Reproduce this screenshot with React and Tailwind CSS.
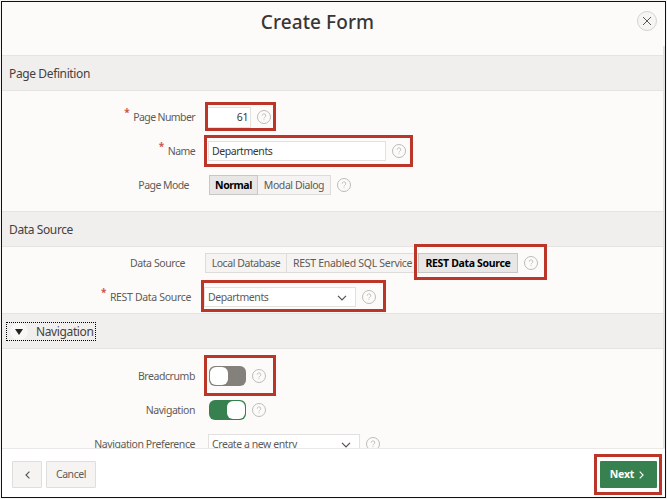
import React from "react";

function Help({ className = "" }) {
  return (
    <svg viewBox="0 0 14 14" className={`h-[14px] w-[14px] shrink-0 ${className}`} fill="none" stroke="#bdbbb9">
      <circle cx="7" cy="7" r="6.5" strokeWidth="1" />
      <path d="M5.2 5.7a1.8 1.8 0 1 1 2.7 1.5c-.6.35-.9.6-.9 1.2" strokeWidth="0.9" />
      <path d="M7 9.3v.9" strokeWidth="0.9" />
    </svg>
  );
}

function Down() {
  return (
    <svg viewBox="0 0 10 6" className="h-[6px] w-[10px]" fill="none" stroke="#55504c" strokeWidth="1.2">
      <path d="M1 .9l4 4 4-4" />
    </svg>
  );
}

function Label({ children, required, className = "" }) {
  return (
    <div className={`flex shrink-0 justify-end pt-[2px] whitespace-nowrap text-[#5f5b57] ${className}`}>
      <span className="relative">
        {required && (
          <span className="absolute -top-[8px] -left-[9px] text-[10px] leading-[20px] font-bold text-[#cf5349]">*</span>
        )}
        {children}
      </span>
    </div>
  );
}

function Section({ children, className = "" }) {
  return (
    <div className={`flex h-[36px] shrink-0 items-center border-y border-[#e5e4e2] bg-[#f0efee] text-[12px] tracking-[-0.38px] text-[#45413e] ${className}`}>
      {children}
    </div>
  );
}

function Toggle({ on }) {
  return (
    <div className={`flex h-[20px] w-[37px] items-center rounded-[6px] p-px ${on ? "justify-end bg-[#37804f]" : "bg-[#84807b]"}`}>
      <div className="h-[18px] w-[18px] rounded-[6px] bg-white" />
    </div>
  );
}

function Mark({ className }) {
  return <div className={`pointer-events-none absolute border-[3px] border-[#bb3529] ${className}`} />;
}

const row = "flex h-[34px] shrink-0 items-center";

export default function App() {
  return (
    <div className="h-[499px] w-[667px] overflow-hidden bg-[#f5f5f5] p-px font-['Noto_Sans',sans-serif] text-[10.5px] tracking-[-0.43px]">
      <div className="relative flex h-[497px] w-[665px] flex-col overflow-hidden border border-[#111] bg-[#fcfbfa]">
        <div className="flex h-[53px] shrink-0 items-start">
          <h1 className="flex-1 pt-[5px] pr-[4px] text-center text-[19px] leading-[30px] font-medium tracking-[0.1px] text-[#3a3633]">
            Create Form
          </h1>
          <button className="mt-[9px] mr-[8px] flex h-[20px] w-[20px] items-center justify-center rounded-full border border-[#d5d3d1] bg-[#f6f5f3]">
            <svg viewBox="0 0 10 10" className="h-[10px] w-[10px]" stroke="#5c5855" strokeWidth="1">
              <path d="M1 1l8 8M9 1l-8 8" />
            </svg>
          </button>
        </div>

        <Section className="pt-px pl-[7px]">Page Definition</Section>
        <div className="h-[120px] shrink-0 pt-[9px]">
          <div className={row}>
            <Label required className="w-[193px] tracking-[-0.6px]">Page Number</Label>
            <div className="ml-[12px] flex h-[21px] w-[44px] items-center justify-end border border-[#e3e1df] bg-white pt-[2px] pr-[2px] text-[#3a3633]">61</div>
            <Help className="ml-[6px]" />
          </div>
          <div className={row}>
            <Label required className="w-[193px] tracking-[-0.6px]">Name</Label>
            <div className="ml-[13px] flex h-[20px] w-[178px] items-center border border-[#e3e1df] bg-white pt-px pl-[3px] text-[#3a3633]">Departments</div>
            <Help className="ml-[6px]" />
          </div>
          <div className={row}>
            <Label className="w-[187px] tracking-[-0.55px]">Page Mode</Label>
            <div className="ml-[20px] flex h-[20px] whitespace-nowrap text-[#5f5b57]">
              <div className="flex w-[49px] items-center justify-center border border-[#c9c6c3] bg-[#e9e7e5] pt-px font-bold text-black">Normal</div>
              <div className="flex w-[73px] items-center justify-center border border-l-0 border-[#dedcda] bg-[#f5f4f2] pt-px">Modal Dialog</div>
            </div>
            <Help className="ml-[6px]" />
          </div>
        </div>

        <Section className="pt-px pl-[7px]">Data Source</Section>
        <div className="h-[66px] shrink-0">
          <div className="-mt-px">
            <div className={row}>
              <Label className="w-[183px]">Data Source</Label>
              <div className="ml-[20px] flex h-[20px] whitespace-nowrap text-[#5f5b57]">
                <div className="flex w-[82px] items-center justify-center border border-[#dedcda] bg-[#f5f4f2] pt-px">Local Database</div>
                <div className="flex w-[131px] items-center border border-x-0 border-[#dedcda] bg-[#f5f4f2] pt-px pl-[6px] tracking-[-0.3px]">REST Enabled SQL Service</div>
                <div className="flex w-[100px] items-center justify-center border border-[#c9c6c3] bg-[#e9e7e5] pt-px font-bold tracking-[-0.33px] text-black">REST Data Source</div>
              </div>
              <Help className="ml-[6px]" />
            </div>
            <div className={row}>
              <Label required className="w-[189px] tracking-[-0.33px]">REST Data Source</Label>
              <div className="ml-[13px] flex h-[20px] w-[152px] items-center justify-between border border-[#e3e1df] bg-white pt-px pr-[8px] pl-[3px] text-[#5f5b57]">
                <span>Departments</span>
                <Down />
              </div>
              <Help className="ml-[6px]" />
            </div>
          </div>
        </div>

        <Section className="pt-px pl-[4px]">
          <div className="flex h-[19px] w-[90px] items-center border border-dotted border-black pl-[3px]">
            <div className="flex h-[17px] w-[18px] items-center justify-center rounded-full bg-[#f8f7f6]">
              <svg viewBox="0 0 8 6" className="h-[6px] w-[8px]" fill="#222">
                <path d="M0 0h8L4 6z" />
              </svg>
            </div>
            <span className="ml-[8px]">Navigation</span>
          </div>
        </Section>
        <div className="h-[99px] shrink-0 overflow-hidden pt-[10px]">
          <div className={row}>
            <Label className="w-[193px]">Breadcrumb</Label>
            <div className="ml-[14px]"><Toggle /></div>
            <Help className="ml-[6px]" />
          </div>
          <div className={row}>
            <Label className="w-[193px]">Navigation</Label>
            <div className="ml-[14px]"><Toggle on /></div>
            <Help className="ml-[6px]" />
          </div>
          <div className={row}>
            <Label className="w-[193px]">Navigation Preference</Label>
            <div className="ml-[13px] flex h-[20px] w-[152px] items-center justify-between border border-[#e3e1df] bg-white pt-px pr-[8px] pl-[3px] text-[#5f5b57]">
              <span>Create a new entry</span>
              <Down />
            </div>
            <Help className="ml-[6px]" />
          </div>
        </div>

        <div className="flex min-h-0 flex-1 items-center border-t border-[#eae9e7] bg-white pt-[4px] pr-[8px] pb-[1px] pl-[10px]">
          <button className="flex h-[27px] w-[30px] items-center justify-center rounded-[1px] border border-[#e0dedc] bg-[#f5f4f2]">
            <svg viewBox="0 0 5 8" className="h-[8px] w-[5px]" fill="none" stroke="#55504c" strokeWidth="1.1">
              <path d="M4.4.7L1 4l3.4 3.3" />
            </svg>
          </button>
          <button className="ml-[4px] h-[27px] w-[50px] rounded-[1px] border border-[#e0dedc] bg-[#f5f4f2] pt-px tracking-[-0.43px] text-[#5f5b57]">Cancel</button>
          <button className="ml-auto flex h-[27px] w-[57px] items-center justify-center rounded-[1px] bg-[#37804f] pr-[3px] font-bold tracking-[-0.2px] text-white">
            <span>Next</span>
            <svg viewBox="0 0 5 8" className="ml-[5px] h-[8px] w-[5px]" fill="none" stroke="white" strokeWidth="1.1">
              <path d="M.7.7L4.1 4 .7 7.3" />
            </svg>
          </button>
        </div>

        <Mark className="top-[100px] left-[203px] h-[29px] w-[71px]" />
        <Mark className="top-[133px] left-[202px] h-[32px] w-[209px]" />
        <Mark className="top-[242px] left-[412px] h-[36px] w-[133px]" />
        <Mark className="top-[278px] left-[199px] h-[32px] w-[185px]" />
        <Mark className="top-[353px] left-[202px] h-[41px] w-[72px]" />
        <Mark className="top-[452px] left-[592px] h-[41px] w-[68px]" />
        <div className="absolute top-[44px] right-0 h-[402px] w-[2px] bg-[#e3e2e0]" />
      </div>
    </div>
  );
}
